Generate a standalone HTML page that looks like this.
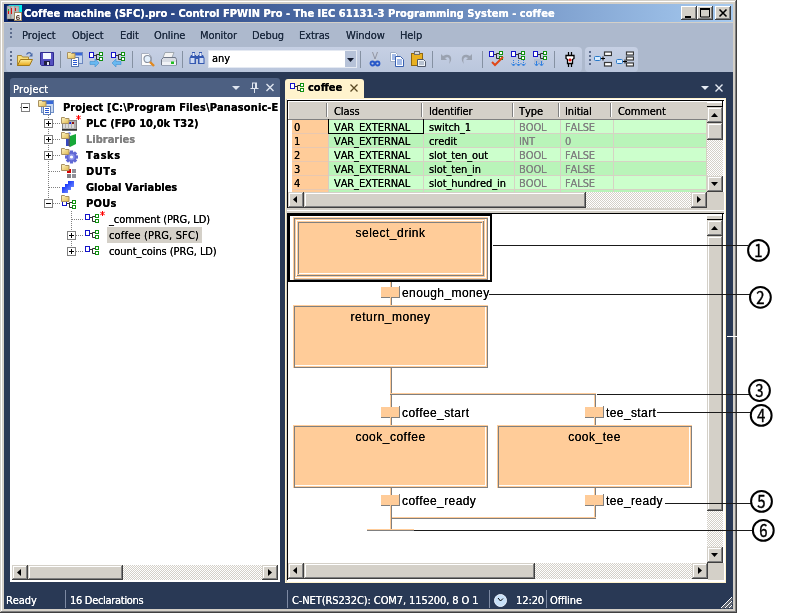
<!DOCTYPE html>
<html>
<head>
<meta charset="utf-8">
<title>Coffee machine (SFC).pro - Control FPWIN Pro</title>
<style>
html,body{margin:0;padding:0;background:#fff;}
body{width:800px;height:613px;position:relative;overflow:hidden;font-family:"DejaVu Sans Condensed","Liberation Sans",sans-serif;font-size:11px;color:#000;font-kerning:none;}
div,span,svg{position:absolute;box-sizing:border-box;}
.t{white-space:nowrap;line-height:14px;height:14px;will-change:transform;letter-spacing:-0.1px;text-shadow:0 0 0 currentColor;}
.b{font-weight:bold;letter-spacing:0;}
.a{font-family:"Liberation Sans",sans-serif;font-size:12px;line-height:14px;height:14px;white-space:nowrap;will-change:transform;letter-spacing:0.4px;text-shadow:0 0 0 currentColor;}
#win{left:0;top:0;width:737px;height:613px;background:#d4d0c8;box-shadow:inset -1px -1px 0 #404040,inset 1px 1px 0 #d4d0c8,inset -2px -2px 0 #808080,inset 2px 2px 0 #fff;}
#title{left:4px;top:4px;width:729px;height:18px;background:linear-gradient(90deg,#0a246a 0%,#a6caf0 100%);}
#title .t{color:#fff;left:20px;top:3px;letter-spacing:0.025px;}
.cb{background:#d4d0c8;width:16px;height:14px;top:2px;box-shadow:inset -1px -1px 0 #404040,inset 1px 1px 0 #fff,inset -2px -2px 0 #808080,inset 2px 2px 0 #d4d0c8;}
#bars{left:4px;top:23px;width:729px;height:49px;background:#adb9cd;}
.mi{color:#1b293e;top:29px;}
.tb{top:47px;height:25px;background:linear-gradient(#c6d0e4,#bac6dc);border-radius:4px;}
.sep{width:1px;background:#8591a2;top:51px;height:17px;}
.ic{width:16px;height:16px;top:51px;}
#main{left:4px;top:72px;width:729px;height:537px;background:#293955;}
.sb{background:#d4d0c8;box-shadow:inset -1px -1px 0 #404040,inset 1px 1px 0 #d4d0c8,inset -2px -2px 0 #808080,inset 2px 2px 0 #fff;}
.trk{background:repeating-conic-gradient(#fff 0 25%,#d4d0c8 0 50%) 0 0/2px 2px;}
.st{color:#fff;top:594px;}
.ss{width:1px;background:#7d8aa3;top:590px;height:18px;}
.dv{width:1px;background:repeating-linear-gradient(180deg,#808080 0 1px,transparent 1px 2px);}
.dh{height:1px;background:repeating-linear-gradient(90deg,#808080 0 1px,transparent 1px 2px);}
.xb{width:9px;height:9px;border:1px solid #808080;background:#fff;}
.xb i{position:absolute;background:#000;}
.xb .h{left:1px;top:3px;width:5px;height:1px;}
.xb .v{left:3px;top:1px;width:1px;height:5px;}
.stp{background:#ffcc99;box-shadow:inset 1px 1px 0 #fc9,inset -1px -1px 0 #808080,inset 2px 2px 0 #808080,inset -2px -2px 0 #fc9,inset -3px -3px 0 #fff;}
.stp .in1{left:3px;top:3px;right:4px;bottom:4px;box-shadow:inset 1px 1px 0 #fff,inset -1px -1px 0 #808080,inset 2px 2px 0 #fc9,inset -2px -2px 0 #fc9,inset 3px 3px 0 #808080,inset -3px -3px 0 #fff;}
</style>
</head>
<body>
<div id="win"></div>
<div id="title"><span class="t b">Coffee machine (SFC).pro - Control FPWIN Pro - The IEC 61131-3 Programming System - coffee</span>
<div class="cb" style="left:677px"></div><div class="cb" style="left:693px"></div><div class="cb" style="left:711px"></div>
</div>
<div id="bars"></div>
<span class="t mi" style="left:22px">Project</span>
<span class="t mi" style="left:72px">Object</span>
<span class="t mi" style="left:120px">Edit</span>
<span class="t mi" style="left:154px">Online</span>
<span class="t mi" style="left:200px">Monitor</span>
<span class="t mi" style="left:252px">Debug</span>
<span class="t mi" style="left:299px">Extras</span>
<span class="t mi" style="left:346px">Window</span>
<span class="t mi" style="left:400px">Help</span>
<div class="tb" style="left:6px;width:576px"></div>
<div class="tb" style="left:585px;width:53px"></div>
<!--TOOLBAR-->
<svg style="left:6px;top:4px;will-change:transform" width="17" height="17" viewBox="0 0 17 17"><path d="M2 1h14v9z" fill="#00f0f0"/><rect x="1" y="2" width="4" height="13" fill="#b8b8b8" stroke="#808080" stroke-width=".5"/><rect x="5" y="2" width="4" height="13" fill="#c4c4c4" stroke="#808080" stroke-width=".5"/><rect x="9" y="2" width="4" height="13" fill="#b8b8b8" stroke="#808080" stroke-width=".5"/><rect x="2" y="5" width="1" height="2" fill="#10c010"/><rect x="2" y="7" width="1" height="3" fill="#e01010"/><rect x="5" y="4" width="1" height="6" fill="#e01010"/><rect x="9" y="4" width="1" height="3" fill="#e01010"/><path d="M2 16h10" stroke="#000"/><rect x="8.500" y="8.500" width="7" height="8" fill="#fff" stroke="#a08860"/><text x="12" y="15.500" font-size="8" font-weight="bold" text-anchor="middle" font-family="Liberation Sans,sans-serif" fill="#4a3020">6</text></svg>
<!-- caption glyphs -->
<svg style="left:681px;top:6px" width="50" height="14" viewBox="0 0 50 14"><path d="M4 10h6v2h-6z"/><path d="M19.500 3v8h9v-8z" fill="none" stroke="#000"/><path d="M19 3h10" stroke="#000" stroke-width="2"/><path d="M38.500 3.500l7 7M45.500 3.500l-7 7" stroke="#000" stroke-width="1.600" fill="none"/></svg>
<!-- grippers -->
<svg style="left:10px;top:28px" width="2" height="10"><path d="M0 0h2v2h-2zM0 4h2v2h-2zM0 8h2v2h-2z" fill="#5c6c8c"/></svg>
<svg style="left:10px;top:51px" width="2" height="14"><path d="M0 0h2v2h-2zM0 4h2v2h-2zM0 8h2v2h-2zM0 12h2v2h-2z" fill="#5c6c8c"/></svg>
<svg style="left:589px;top:51px" width="2" height="14"><path d="M0 0h2v2h-2zM0 4h2v2h-2zM0 8h2v2h-2zM0 12h2v2h-2z" fill="#5c6c8c"/></svg>
<div class="sep" style="left:60px"></div><div class="sep" style="left:132px"></div><div class="sep" style="left:182px"></div><div class="sep" style="left:360px"></div><div class="sep" style="left:432px"></div><div class="sep" style="left:482px"></div><div class="sep" style="left:554px"></div>
<!-- open -->
<svg class="ic" style="left:17px" viewBox="0 0 16 16"><defs><linearGradient id="gy" x1="0" y1="0" x2="0" y2="1"><stop offset="0" stop-color="#fff0a0"/><stop offset="1" stop-color="#e8a818"/></linearGradient></defs><path d="M0.500 4.500h4l1 1.500h6v8.500h-11z" fill="#f8dc78" stroke="#a88838"/><path d="M3.500 8.500h12l-3 6h-12z" fill="url(#gy)" stroke="#a07818"/><path d="M9.500 3.500c1.500-2.500 4-2.500 5 0" fill="none" stroke="#4868a8" stroke-width="1.200"/><path d="M15.500 2v3.500h-3.500z" fill="#4868a8"/></svg>
<!-- save -->
<svg class="ic" style="left:40px" viewBox="0 0 16 16"><path d="M0.500 1.500h13v13h-12l-1-1z" fill="#5450c0" stroke="#302c90"/><rect x="3" y="2" width="8" height="6" fill="#f4f8ff"/><rect x="4" y="10" width="6" height="4" fill="#202040"/><rect x="7" y="11" width="2" height="3" fill="#e0e4f0"/></svg>
<!-- project -->
<svg class="ic" style="left:67px" viewBox="0 0 16 16"><rect x="5.500" y="1.500" width="10" height="11" fill="#c8d8f0" stroke="#6c88c0"/><rect x="6" y="2" width="9" height="2.500" fill="#3868d8"/><rect x="4.500" y="6.500" width="7" height="9" fill="#fff" stroke="#5878b0"/><path d="M6 9.500h4M6 11.500h4M6 13.500h4" stroke="#2858d0"/><use href="#fold"/></svg>
<!-- pou + right arrow -->
<svg class="ic" style="left:89px" viewBox="0 0 16 16"><g transform="translate(0,1)"><use href="#pou"/></g><path d="M1 10.500h5v-2.500l4 4-4 4v-2.500h-5z" fill="#68b8f0" stroke="#4090d0" stroke-width=".6"/></svg>
<svg class="ic" style="left:111px" viewBox="0 0 16 16"><g transform="translate(0,1)"><use href="#pou"/></g><path d="M10 10.500h-5v-2.500l-4 4 4 4v-2.500h5z" fill="#68b8f0" stroke="#4090d0" stroke-width=".6"/></svg>
<!-- preview -->
<svg class="ic" style="left:140px" viewBox="0 0 16 16"><path d="M1.500 2.500h7l3 3v9h-10z" fill="#fcfcfc" stroke="#a8b0c0"/><circle cx="7.500" cy="8" r="3.500" fill="#e4f0fc" stroke="#8890a0" stroke-width="1.200"/><path d="M10 11l4 4" stroke="#e08820" stroke-width="2.400"/></svg>
<!-- print -->
<svg class="ic" style="left:161px" viewBox="0 0 16 16"><path d="M4 1.500h9l-2 5h-9z" fill="#f4f4f4" stroke="#a0a8b0"/><path d="M0.500 8.500l2-2h12l1 2v5.500h-15z" fill="#d8dce4" stroke="#707888"/><rect x="1" y="11" width="14" height="3" fill="#f0f2f6"/><rect x="10" y="10.500" width="3" height="2.500" fill="#20c020"/></svg>
<!-- binoculars -->
<svg class="ic" style="left:189px" viewBox="0 0 16 16"><path d="M3 1h3v3h1v9h-6.500v-6l1.500-3h1zM10 1h3v3h1l1.500 3v6h-6.500v-9h1z" fill="#3458b0"/><rect x="1.500" y="7" width="4" height="5" fill="#d0dcf4"/><rect x="10.500" y="7" width="4" height="5" fill="#d0dcf4"/><rect x="7" y="5" width="2" height="3" fill="#3458b0"/><rect x="3.500" y="2" width="2" height="3" fill="#e8eefc"/><rect x="10.500" y="2" width="2" height="3" fill="#e8eefc"/></svg>
<!-- combo -->
<div style="left:208px;top:50px;width:149px;height:18px;background:#fff;border:1px solid #e4e9f2"></div>
<div style="left:345px;top:51px;width:11px;height:16px;background:#b6c2d8"></div>
<svg style="left:347px;top:58px" width="7" height="4"><path d="M0 0h7L3.500 4z" fill="#10182c"/></svg>
<span class="t" style="left:212px;top:52px">any</span>
<!-- cut -->
<svg class="ic" style="left:367px" viewBox="0 0 16 16"><path d="M5.500 1l3 9M10.500 1l-3 9" stroke="#c8ccd4" stroke-width="2" fill="none"/><path d="M5.500 1l2.500 7M10.500 1l-2.500 7" stroke="#8088a0" stroke-width=".8" fill="none"/><circle cx="5.500" cy="12.500" r="2" fill="none" stroke="#2858c8" stroke-width="1.800"/><circle cx="10.500" cy="12.500" r="2" fill="none" stroke="#2858c8" stroke-width="1.800"/></svg>
<!-- copy -->
<svg class="ic" style="left:389px" viewBox="0 0 16 16"><path d="M1.500 1.500h5l2 2v7h-7z" fill="#fff" stroke="#a0b0c8"/><path d="M3 4h4M3 6h4M3 8h4" stroke="#4878d0"/><path d="M6.500 5.500h5l3 3v7h-8z" fill="#fff" stroke="#3860b0"/><path d="M8 9h5M8 11h5M8 13h5" stroke="#4878d0"/></svg>
<!-- paste -->
<svg class="ic" style="left:411px" viewBox="0 0 16 16"><rect x="0.500" y="2.500" width="11" height="12" fill="#e8b020" stroke="#906810"/><rect x="3.500" y="0.500" width="5" height="3" fill="#d8d8d8" stroke="#707070"/><path d="M6.500 8.500h6l2 2v5h-8z" fill="#f0f4f8" stroke="#505868"/><path d="M8 11h5M8 13h5" stroke="#8090a8"/></svg>
<!-- undo / redo -->
<svg class="ic" style="left:439px" viewBox="0 0 16 16"><path d="M2 3v6h6l-2-2c3-2 6 0 4 6c5-6 1-12-6-8z" fill="#9aa2b0"/></svg>
<svg class="ic" style="left:458px" viewBox="0 0 16 16"><path d="M14 3v6h-6l2-2c-3-2-6 0-4 6c-5-6-1-12 6-8z" fill="#9aa2b0"/></svg>
<!-- check -->
<svg class="ic" style="left:489px" viewBox="0 0 16 16"><use href="#pou"/><path d="M3 11l3 3 8-8" stroke="#e04818" stroke-width="2" fill="none"/></svg>
<!-- compile -->
<svg class="ic" style="left:511px" viewBox="0 0 16 16"><use href="#pou"/><path d="M2.500 9v5M7.500 9v5M12.500 9v5" stroke="#3080e0" stroke-dasharray="1 1"/><path d="M0.500 12.500l2 2.500 2-2.500M5.500 12.500l2 2.500 2-2.500M10.500 12.500l2 2.500 2-2.500" stroke="#3080e0" fill="none"/></svg>
<svg class="ic" style="left:533px" viewBox="0 0 16 16"><use href="#pou"/><path d="M1 8h9v4h-9z" fill="#a8b4c8" opacity=".6"/><path d="M3.500 10v4M8.500 10v4" stroke="#3080e0"/><path d="M1.500 12.500l2 2.500 2-2.500M6.500 12.500l2 2.500 2-2.500" stroke="#3080e0" fill="none"/></svg>
<!-- plug -->
<svg class="ic" style="left:562px" viewBox="0 0 16 16"><path d="M6.500 1v3.500M9.500 1v3.500" stroke="#000" stroke-width="1.200"/><path d="M4 4.500h8v3l-1.500 1v4h-5v-4l-1.500-1z" fill="#fff" stroke="#000" stroke-width="1.300"/><path d="M8 7.500v3M6.500 9h3" stroke="#e00000" stroke-width="1.400"/><path d="M6.500 13v3M9.500 13v3" stroke="#000" stroke-width="1.200"/></svg>
<!-- toolbar 2 -->
<svg style="left:594px;top:51px" width="18" height="16" viewBox="0 0 18 16"><rect x="0.500" y="5.500" width="6" height="4" rx="1" fill="#d8ecff" stroke="#2878c8"/><path d="M7 7.500h4M9 5.500v4" stroke="#000"/><rect x="10.500" y="1" width="7" height="3.500" fill="#fff" stroke="#383838" stroke-width="1.200"/><rect x="10.500" y="11.500" width="7" height="3.500" fill="#fff" stroke="#383838" stroke-width="1.200"/></svg>
<svg style="left:616px;top:51px" width="18" height="16" viewBox="0 0 18 16"><rect x="0.500" y="8.500" width="6" height="4" rx="1" fill="#d8ecff" stroke="#2878c8"/><path d="M7 10.500h4M9 8.500v4" stroke="#000"/><rect x="10.500" y="1" width="7" height="3" fill="#fff" stroke="#383838" stroke-width="1.200"/><rect x="10.500" y="6" width="7" height="3" fill="#fff" stroke="#383838" stroke-width="1.200"/><rect x="10.500" y="12" width="7" height="3" fill="#fff" stroke="#383838" stroke-width="1.200"/></svg>
<div id="main"></div>
<!--PROJECT-->
<div style="left:10px;top:78px;width:270px;height:19px;background:#4d6082;border-radius:3px 3px 0 0"></div>
<span class="t" style="left:13px;top:83px;color:#fff;letter-spacing:0.15px">Project</span>
<svg style="left:231px;top:82px" width="46" height="12" viewBox="0 0 46 12"><path d="M1 4h8l-4 4z" fill="#dfe5ef"/><path d="M21.5 1v5M25.500 1v5M21 1h5M19.500 6.500h8M23.500 7v4" stroke="#dfe5ef" fill="none"/><path d="M24.500 1v5" stroke="#dfe5ef"/><path d="M35.500 2l7 7M42.500 2l-7 7" stroke="#dfe5ef" stroke-width="1.400" fill="none"/></svg>
<div id="tree" style="left:10px;top:97px;width:270px;height:485px;background:#fff;overflow:hidden">
<!-- dotted lines -->
<div class="dv" style="left:38px;top:18px;height:89px"></div>
<div class="dv" style="left:61px;top:114px;height:41px"></div>
<div class="dh" style="left:10px;top:10px;width:2px"></div>
<div class="dh" style="left:43px;top:26px;width:8px"></div>
<div class="dh" style="left:43px;top:42px;width:8px"></div>
<div class="dh" style="left:43px;top:58px;width:8px"></div>
<div class="dh" style="left:39px;top:74px;width:12px"></div>
<div class="dh" style="left:39px;top:90px;width:12px"></div>
<div class="dh" style="left:43px;top:106px;width:8px"></div>
<div class="dh" style="left:62px;top:122px;width:12px"></div>
<div class="dh" style="left:66px;top:138px;width:8px"></div>
<div class="dh" style="left:66px;top:154px;width:8px"></div>
<!-- expand boxes -->
<div class="xb" style="left:11px;top:6px"><i class="h"></i></div>
<div class="xb" style="left:34px;top:22px"><i class="h"></i><i class="v"></i></div>
<div class="xb" style="left:34px;top:38px"><i class="h"></i><i class="v"></i></div>
<div class="xb" style="left:34px;top:54px"><i class="h"></i><i class="v"></i></div>
<div class="xb" style="left:34px;top:102px"><i class="h"></i></div>
<div class="xb" style="left:57px;top:134px"><i class="h"></i><i class="v"></i></div>
<div class="xb" style="left:57px;top:150px"><i class="h"></i><i class="v"></i></div>
<!-- labels -->
<div style="left:97px;top:130px;width:95px;height:16px;background:#d4d0c8"></div>
<span class="t b" style="left:53px;top:4px;letter-spacing:0.12px">Project [C:\Program Files\Panasonic-E</span>
<span class="t b" style="left:76px;top:20px">PLC (FP0 10,0k T32)</span>
<span class="t b" style="left:76px;top:36px;color:#808080">Libraries</span>
<span class="t b" style="left:76px;top:52px;letter-spacing:0.6px">Tasks</span>
<span class="t b" style="left:76px;top:68px;letter-spacing:0.5px">DUTs</span>
<span class="t b" style="left:76px;top:84px">Global Variables</span>
<span class="t b" style="left:76px;top:100px;letter-spacing:0.25px">POUs</span>
<span class="t" style="left:99px;top:116px">_comment (PRG, LD)</span>
<span class="t" style="left:99px;top:132px;letter-spacing:0.17px">coffee (PRG, SFC)</span>
<span class="t" style="left:99px;top:148px;letter-spacing:-0.08px">count_coins (PRG, LD)</span>
<!--TREEICONS-->
<svg width="0" height="0" style="left:0;top:0"><defs>
<linearGradient id="gf" x1="0" y1="0" x2="1" y2="1"><stop offset="0" stop-color="#fff6c8"/><stop offset="1" stop-color="#e0b84a"/></linearGradient>
<linearGradient id="gb" x1="0" y1="0" x2="1" y2="1"><stop offset="0" stop-color="#1030f8"/><stop offset="1" stop-color="#6a86ff"/></linearGradient>
<g id="fold"><path d="M0.500 1.500h3l1 1h3.500v5h-7.500z" fill="url(#gf)" stroke="#a89060" stroke-width="1"/></g>
<g id="pou"><rect x="0.500" y="0.500" width="4" height="5" fill="#fff" stroke="#1414c8"/><path d="M5 3.500h2.500M7.500 2.500h3M7.500 2.500v5h3" stroke="#303030" fill="none"/><rect x="10.500" y="0.500" width="3" height="3" fill="#fff" stroke="#109010"/><rect x="10.500" y="5.500" width="3" height="3" fill="#fff" stroke="#109010"/></g>
<g id="ast"><path d="M2.500 0v5M0.300 1.200l4.400 2.600M4.700 1.200l-4.400 2.600" stroke="#f00" stroke-width="1" fill="none"/></g>
</defs></svg>
<!-- root -->
<svg style="left:28px;top:2px" width="17" height="17" viewBox="0 0 17 17"><rect x="3.500" y="1.500" width="12" height="12" fill="#c8d8f0" stroke="#7090c8"/><rect x="4" y="2" width="11" height="3" fill="#3868d8"/><rect x="5.500" y="7.500" width="7" height="8" fill="#fff" stroke="#6080b8"/><path d="M7 9.500h4M7 11.500h4M7 13.500h4" stroke="#2858d0"/><use href="#fold"/></svg>
<!-- PLC -->
<svg style="left:51px;top:19px" width="17" height="15" viewBox="0 0 17 15"><rect x="1.500" y="4.500" width="14" height="9" fill="#b0b0b0" stroke="#808080"/><path d="M3 8v4M6 8v4M9 8v4M12 8v4" stroke="#e8e8e8" stroke-width="1.500"/><rect x="5" y="6" width="2" height="2" fill="#109020"/><rect x="8" y="6" width="2" height="2" fill="#1020f0"/><rect x="11" y="6" width="2" height="2" fill="#901010"/><path d="M1 14h15" stroke="#000" stroke-width="1.200"/><use href="#fold"/></svg>
<svg style="left:66px;top:18px" width="5" height="5"><use href="#ast"/></svg>
<!-- Libraries -->
<svg style="left:51px;top:34px" width="17" height="17" viewBox="0 0 17 17"><path d="M5 4h4v11h-4z" fill="#3848c0"/><path d="M6 2l3-1 1 2-3 1z" fill="#7088f0"/><path d="M9 5l6-2v10l-6 3z" fill="#18a838"/><path d="M9 5v11l-1.500-1v-10z" fill="#505860"/><use href="#fold"/></svg>
<!-- Tasks -->
<svg style="left:51px;top:50px" width="17" height="17" viewBox="0 0 17 17"><g transform="translate(10.500,10)"><g fill="#6068d4"><circle r="5"/><rect x="-1.600" y="-6.500" width="3.200" height="13"/><rect x="-1.600" y="-6.500" width="3.200" height="13" transform="rotate(45)"/><rect x="-1.600" y="-6.500" width="3.200" height="13" transform="rotate(90)"/><rect x="-1.600" y="-6.500" width="3.200" height="13" transform="rotate(135)"/></g><circle r="3.200" fill="#8890e8"/><circle r="1.600" fill="#fff"/></g><use href="#fold"/></svg>
<!-- DUTs -->
<svg style="left:51px;top:66px" width="17" height="17" viewBox="0 0 17 17"><rect x="6" y="6" width="4" height="4" fill="#d80000"/><rect x="11" y="6" width="4" height="4" fill="#909098"/><rect x="6" y="11" width="4" height="4" fill="#808088"/><rect x="11" y="11" width="4" height="4" fill="#909098"/><use href="#fold"/></svg>
<!-- Globals -->
<svg style="left:51px;top:83px" width="17" height="15" viewBox="0 0 17 15"><rect x="7" y="1" width="6" height="6" fill="url(#gb)"/><rect x="4" y="4" width="6" height="6" fill="url(#gb)"/><rect x="1" y="7" width="6" height="6" fill="url(#gb)"/></svg>
<!-- POUs -->
<svg style="left:51px;top:97px" width="17" height="18" viewBox="0 0 17 18"><g transform="translate(1,6)"><use href="#pou"/></g><use href="#fold"/></svg>
<svg style="left:75px;top:117px" width="16" height="11"><use href="#pou"/></svg>
<svg style="left:90px;top:114px" width="5" height="5"><use href="#ast"/></svg>
<svg style="left:75px;top:133px" width="16" height="11"><use href="#pou"/></svg>
<svg style="left:75px;top:149px" width="16" height="11"><use href="#pou"/></svg>
<!-- h scrollbar -->
<div class="trk" style="left:2px;top:468px;width:266px;height:15px"></div>
<div class="sb" style="left:2px;top:468px;width:16px;height:15px"><svg style="left:5px;top:4px" width="4" height="7"><path d="M4 0v7L0 3.500z"/></svg></div>
<div class="sb" style="left:18px;top:468px;width:95px;height:15px"></div>
<div class="sb" style="left:252px;top:468px;width:16px;height:15px"><svg style="left:6px;top:4px" width="4" height="7"><path d="M0 0v7L4 3.500z"/></svg></div>
</div>
<!--EDITOR-->
<div style="left:285px;top:79px;width:79px;height:20px;background:#fff3cd;border-radius:3px 3px 0 0"></div>
<svg style="left:290px;top:83px" width="16" height="11"><use href="#pou"/></svg>
<span class="t b" style="left:308px;top:81px">coffee</span>
<svg style="left:349px;top:83px" width="10" height="10"><path d="M1.500 1.500l7 7M8.500 1.500l-7 7" stroke="#5a4a24" stroke-width="1.300" fill="none"/></svg>
<svg style="left:701px;top:84px" width="26" height="10"><path d="M0 2h8l-4 4z" fill="#e6ebf3"/><path d="M14.500 0.500l7 7M21.500 0.500l-7 7" stroke="#e6ebf3" stroke-width="1.400" fill="none"/></svg>
<div style="left:285px;top:98px;width:441px;height:485px;background:#fff3cd"></div>
<div style="left:286px;top:99px;width:439px;height:483px;background:#fff;border-left:1px solid #d4d0c8"></div>
<div id="grid" style="left:287px;top:100px;width:437px;height:108px;background:#d4d0c8;overflow:hidden;border-left:1px solid #000;border-top:1px solid #000">
<div style="left:38px;top:2px;width:1px;height:14px;background:#808080;"></div>
<div style="left:39px;top:2px;width:1px;height:14px;background:#fff;"></div>
<div style="left:133px;top:2px;width:1px;height:14px;background:#808080;"></div>
<div style="left:134px;top:2px;width:1px;height:14px;background:#fff;"></div>
<div style="left:224px;top:2px;width:1px;height:14px;background:#808080;"></div>
<div style="left:225px;top:2px;width:1px;height:14px;background:#fff;"></div>
<div style="left:270px;top:2px;width:1px;height:14px;background:#808080;"></div>
<div style="left:271px;top:2px;width:1px;height:14px;background:#fff;"></div>
<div style="left:322px;top:2px;width:1px;height:14px;background:#808080;"></div>
<div style="left:323px;top:2px;width:1px;height:14px;background:#fff;"></div>
<div style="left:0px;top:18px;width:419px;height:1px;background:#808080;"></div>
<div style="left:0px;top:0px;width:419px;height:1px;background:#fff;"></div>
<div style="left:0px;top:0px;width:1px;height:18px;background:#fff;"></div>
<span class="t" style="left:46px;top:4px;">Class</span>
<span class="t" style="left:141px;top:4px;">Identifier</span>
<span class="t" style="left:231px;top:4px;">Type</span>
<span class="t" style="left:277px;top:4px;">Initial</span>
<span class="t" style="left:330px;top:4px;">Comment</span>
<div style="left:0px;top:19px;width:4px;height:14px;background:#fff;"></div>
<div style="left:4px;top:19px;width:36px;height:13px;background:#ffcc99;"></div>
<div style="left:4px;top:32px;width:36px;height:1px;background:#e8c8b0;"></div>
<div style="left:40px;top:19px;width:1px;height:14px;background:#d8ccc0;"></div>
<div style="left:41px;top:19px;width:94px;height:13px;background:#ccffcc;"></div>
<div style="left:41px;top:32px;width:95px;height:1px;background:#d6d2c4;"></div>
<div style="left:135px;top:19px;width:1px;height:14px;background:#d6d2c4;"></div>
<div style="left:136px;top:19px;width:90px;height:13px;background:#ccffcc;"></div>
<div style="left:136px;top:32px;width:91px;height:1px;background:#d6d2c4;"></div>
<div style="left:226px;top:19px;width:1px;height:14px;background:#d6d2c4;"></div>
<div style="left:227px;top:19px;width:45px;height:13px;background:#ccffcc;"></div>
<div style="left:227px;top:32px;width:46px;height:1px;background:#d6d2c4;"></div>
<div style="left:272px;top:19px;width:1px;height:14px;background:#d6d2c4;"></div>
<div style="left:273px;top:19px;width:52px;height:13px;background:#ccffcc;"></div>
<div style="left:273px;top:32px;width:53px;height:1px;background:#d6d2c4;"></div>
<div style="left:325px;top:19px;width:1px;height:14px;background:#d6d2c4;"></div>
<div style="left:326px;top:19px;width:92px;height:13px;background:#ccffcc;"></div>
<div style="left:326px;top:32px;width:93px;height:1px;background:#d6d2c4;"></div>
<div style="left:418px;top:19px;width:1px;height:14px;background:#d6d2c4;"></div>
<span class="t" style="left:6px;top:20px;">0</span>
<span class="t" style="left:46px;top:20px;">VAR_EXTERNAL</span>
<span class="t" style="left:141px;top:20px;">switch_1</span>
<span class="t" style="left:231px;top:20px;color:#808080">BOOL</span>
<span class="t" style="left:277px;top:20px;color:#808080">FALSE</span>
<div style="left:0px;top:33px;width:4px;height:14px;background:#fff;"></div>
<div style="left:4px;top:33px;width:36px;height:13px;background:#ffcc99;"></div>
<div style="left:4px;top:46px;width:36px;height:1px;background:#e8c8b0;"></div>
<div style="left:40px;top:33px;width:1px;height:14px;background:#d8ccc0;"></div>
<div style="left:41px;top:33px;width:94px;height:13px;background:#b9f4b9;"></div>
<div style="left:41px;top:46px;width:95px;height:1px;background:#d6d2c4;"></div>
<div style="left:135px;top:33px;width:1px;height:14px;background:#d6d2c4;"></div>
<div style="left:136px;top:33px;width:90px;height:13px;background:#b9f4b9;"></div>
<div style="left:136px;top:46px;width:91px;height:1px;background:#d6d2c4;"></div>
<div style="left:226px;top:33px;width:1px;height:14px;background:#d6d2c4;"></div>
<div style="left:227px;top:33px;width:45px;height:13px;background:#b9f4b9;"></div>
<div style="left:227px;top:46px;width:46px;height:1px;background:#d6d2c4;"></div>
<div style="left:272px;top:33px;width:1px;height:14px;background:#d6d2c4;"></div>
<div style="left:273px;top:33px;width:52px;height:13px;background:#b9f4b9;"></div>
<div style="left:273px;top:46px;width:53px;height:1px;background:#d6d2c4;"></div>
<div style="left:325px;top:33px;width:1px;height:14px;background:#d6d2c4;"></div>
<div style="left:326px;top:33px;width:92px;height:13px;background:#b9f4b9;"></div>
<div style="left:326px;top:46px;width:93px;height:1px;background:#d6d2c4;"></div>
<div style="left:418px;top:33px;width:1px;height:14px;background:#d6d2c4;"></div>
<span class="t" style="left:6px;top:34px;">1</span>
<span class="t" style="left:46px;top:34px;">VAR_EXTERNAL</span>
<span class="t" style="left:141px;top:34px;">credit</span>
<span class="t" style="left:231px;top:34px;color:#808080">INT</span>
<span class="t" style="left:277px;top:34px;color:#808080">0</span>
<div style="left:0px;top:47px;width:4px;height:14px;background:#fff;"></div>
<div style="left:4px;top:47px;width:36px;height:13px;background:#ffcc99;"></div>
<div style="left:4px;top:60px;width:36px;height:1px;background:#e8c8b0;"></div>
<div style="left:40px;top:47px;width:1px;height:14px;background:#d8ccc0;"></div>
<div style="left:41px;top:47px;width:94px;height:13px;background:#ccffcc;"></div>
<div style="left:41px;top:60px;width:95px;height:1px;background:#d6d2c4;"></div>
<div style="left:135px;top:47px;width:1px;height:14px;background:#d6d2c4;"></div>
<div style="left:136px;top:47px;width:90px;height:13px;background:#ccffcc;"></div>
<div style="left:136px;top:60px;width:91px;height:1px;background:#d6d2c4;"></div>
<div style="left:226px;top:47px;width:1px;height:14px;background:#d6d2c4;"></div>
<div style="left:227px;top:47px;width:45px;height:13px;background:#ccffcc;"></div>
<div style="left:227px;top:60px;width:46px;height:1px;background:#d6d2c4;"></div>
<div style="left:272px;top:47px;width:1px;height:14px;background:#d6d2c4;"></div>
<div style="left:273px;top:47px;width:52px;height:13px;background:#ccffcc;"></div>
<div style="left:273px;top:60px;width:53px;height:1px;background:#d6d2c4;"></div>
<div style="left:325px;top:47px;width:1px;height:14px;background:#d6d2c4;"></div>
<div style="left:326px;top:47px;width:92px;height:13px;background:#ccffcc;"></div>
<div style="left:326px;top:60px;width:93px;height:1px;background:#d6d2c4;"></div>
<div style="left:418px;top:47px;width:1px;height:14px;background:#d6d2c4;"></div>
<span class="t" style="left:6px;top:48px;">2</span>
<span class="t" style="left:46px;top:48px;">VAR_EXTERNAL</span>
<span class="t" style="left:141px;top:48px;">slot_ten_out</span>
<span class="t" style="left:231px;top:48px;color:#808080">BOOL</span>
<span class="t" style="left:277px;top:48px;color:#808080">FALSE</span>
<div style="left:0px;top:61px;width:4px;height:14px;background:#fff;"></div>
<div style="left:4px;top:61px;width:36px;height:13px;background:#ffcc99;"></div>
<div style="left:4px;top:74px;width:36px;height:1px;background:#e8c8b0;"></div>
<div style="left:40px;top:61px;width:1px;height:14px;background:#d8ccc0;"></div>
<div style="left:41px;top:61px;width:94px;height:13px;background:#b9f4b9;"></div>
<div style="left:41px;top:74px;width:95px;height:1px;background:#d6d2c4;"></div>
<div style="left:135px;top:61px;width:1px;height:14px;background:#d6d2c4;"></div>
<div style="left:136px;top:61px;width:90px;height:13px;background:#b9f4b9;"></div>
<div style="left:136px;top:74px;width:91px;height:1px;background:#d6d2c4;"></div>
<div style="left:226px;top:61px;width:1px;height:14px;background:#d6d2c4;"></div>
<div style="left:227px;top:61px;width:45px;height:13px;background:#b9f4b9;"></div>
<div style="left:227px;top:74px;width:46px;height:1px;background:#d6d2c4;"></div>
<div style="left:272px;top:61px;width:1px;height:14px;background:#d6d2c4;"></div>
<div style="left:273px;top:61px;width:52px;height:13px;background:#b9f4b9;"></div>
<div style="left:273px;top:74px;width:53px;height:1px;background:#d6d2c4;"></div>
<div style="left:325px;top:61px;width:1px;height:14px;background:#d6d2c4;"></div>
<div style="left:326px;top:61px;width:92px;height:13px;background:#b9f4b9;"></div>
<div style="left:326px;top:74px;width:93px;height:1px;background:#d6d2c4;"></div>
<div style="left:418px;top:61px;width:1px;height:14px;background:#d6d2c4;"></div>
<span class="t" style="left:6px;top:62px;">3</span>
<span class="t" style="left:46px;top:62px;">VAR_EXTERNAL</span>
<span class="t" style="left:141px;top:62px;">slot_ten_in</span>
<span class="t" style="left:231px;top:62px;color:#808080">BOOL</span>
<span class="t" style="left:277px;top:62px;color:#808080">FALSE</span>
<div style="left:0px;top:75px;width:4px;height:14px;background:#fff;"></div>
<div style="left:4px;top:75px;width:36px;height:13px;background:#ffcc99;"></div>
<div style="left:4px;top:88px;width:36px;height:1px;background:#e8c8b0;"></div>
<div style="left:40px;top:75px;width:1px;height:14px;background:#d8ccc0;"></div>
<div style="left:41px;top:75px;width:94px;height:13px;background:#ccffcc;"></div>
<div style="left:41px;top:88px;width:95px;height:1px;background:#d6d2c4;"></div>
<div style="left:135px;top:75px;width:1px;height:14px;background:#d6d2c4;"></div>
<div style="left:136px;top:75px;width:90px;height:13px;background:#ccffcc;"></div>
<div style="left:136px;top:88px;width:91px;height:1px;background:#d6d2c4;"></div>
<div style="left:226px;top:75px;width:1px;height:14px;background:#d6d2c4;"></div>
<div style="left:227px;top:75px;width:45px;height:13px;background:#ccffcc;"></div>
<div style="left:227px;top:88px;width:46px;height:1px;background:#d6d2c4;"></div>
<div style="left:272px;top:75px;width:1px;height:14px;background:#d6d2c4;"></div>
<div style="left:273px;top:75px;width:52px;height:13px;background:#ccffcc;"></div>
<div style="left:273px;top:88px;width:53px;height:1px;background:#d6d2c4;"></div>
<div style="left:325px;top:75px;width:1px;height:14px;background:#d6d2c4;"></div>
<div style="left:326px;top:75px;width:92px;height:13px;background:#ccffcc;"></div>
<div style="left:326px;top:88px;width:93px;height:1px;background:#d6d2c4;"></div>
<div style="left:418px;top:75px;width:1px;height:14px;background:#d6d2c4;"></div>
<span class="t" style="left:6px;top:76px;">4</span>
<span class="t" style="left:46px;top:76px;">VAR_EXTERNAL</span>
<span class="t" style="left:141px;top:76px;">slot_hundred_in</span>
<span class="t" style="left:231px;top:76px;color:#808080">BOOL</span>
<span class="t" style="left:277px;top:76px;color:#808080">FALSE</span>
<div style="left:0px;top:89px;width:4px;height:14px;background:#fff;"></div>
<div style="left:4px;top:89px;width:36px;height:13px;background:#ffcc99;"></div>
<div style="left:4px;top:102px;width:36px;height:1px;background:#e8c8b0;"></div>
<div style="left:40px;top:89px;width:1px;height:14px;background:#d8ccc0;"></div>
<div style="left:41px;top:89px;width:94px;height:13px;background:#b9f4b9;"></div>
<div style="left:41px;top:102px;width:95px;height:1px;background:#d6d2c4;"></div>
<div style="left:135px;top:89px;width:1px;height:14px;background:#d6d2c4;"></div>
<div style="left:136px;top:89px;width:90px;height:13px;background:#b9f4b9;"></div>
<div style="left:136px;top:102px;width:91px;height:1px;background:#d6d2c4;"></div>
<div style="left:226px;top:89px;width:1px;height:14px;background:#d6d2c4;"></div>
<div style="left:227px;top:89px;width:45px;height:13px;background:#b9f4b9;"></div>
<div style="left:227px;top:102px;width:46px;height:1px;background:#d6d2c4;"></div>
<div style="left:272px;top:89px;width:1px;height:14px;background:#d6d2c4;"></div>
<div style="left:273px;top:89px;width:52px;height:13px;background:#b9f4b9;"></div>
<div style="left:273px;top:102px;width:53px;height:1px;background:#d6d2c4;"></div>
<div style="left:325px;top:89px;width:1px;height:14px;background:#d6d2c4;"></div>
<div style="left:326px;top:89px;width:92px;height:13px;background:#b9f4b9;"></div>
<div style="left:326px;top:102px;width:93px;height:1px;background:#d6d2c4;"></div>
<div style="left:418px;top:89px;width:1px;height:14px;background:#d6d2c4;"></div>
<div style="left:40px;top:18px;width:96px;height:15px;border:1px solid #000;border-top:0"></div>
<div style="left:435px;top:0px;width:1px;height:91px;background:#fff;"></div>
<div style="left:419px;top:0px;width:16px;height:91px;background:;background:repeating-conic-gradient(#fff 0 25%,#d4d0c8 0 50%) 0 0/2px 2px"></div>
<div style="left:419px;top:0px;width:16px;height:6px;background:linear-gradient(#fff 0 2px,#d4d0c8 2px 5px,#000 5px 6px);border-right:1px solid #000"></div>
<div class="sb" style="left:419px;top:6px;width:16px;height:16px"><svg style="left:4px;top:6px" width="7" height="4"><path d="M0 4h7L3.500 0z"/></svg></div>
<div class="sb" style="left:419px;top:22px;width:16px;height:17px"></div>
<div class="sb" style="left:419px;top:75px;width:16px;height:16px"><svg style="left:4px;top:6px" width="7" height="4"><path d="M0 0h7L3.500 4z"/></svg></div>
<div style="left:0px;top:91px;width:419px;height:16px;background:;background:repeating-conic-gradient(#fff 0 25%,#d4d0c8 0 50%) 0 0/2px 2px"></div>
<div class="sb" style="left:0px;top:91px;width:16px;height:16px"><svg style="left:5px;top:4px" width="4" height="7"><path d="M4 0v7L0 3.500z"/></svg></div>
<div class="sb" style="left:16px;top:91px;width:282px;height:16px"></div>
<div class="sb" style="left:403px;top:91px;width:16px;height:16px"><svg style="left:6px;top:4px" width="4" height="7"><path d="M0 0v7L4 3.500z"/></svg></div>
<div style="left:419px;top:91px;width:17px;height:16px;background:#d4d0c8;"></div>
</div>
<div style="left:287px;top:208px;width:437px;height:5px;background:linear-gradient(#d4d0c8 0 2px,#fff 2px 3px,#d4d0c8 3px 5px)"></div>
<div id="sfc" style="left:287px;top:213px;width:437px;height:367px;background:#fff;overflow:hidden;border-left:1px solid #000;border-top:1px solid #000">
<div style="left:0px;top:0px;width:204px;height:68px;border:2px solid #000"></div>
<div style="left:102px;top:68px;width:1px;height:23px;background:#ffcc99;"></div>
<div style="left:103px;top:68px;width:1px;height:23px;background:#808080;"></div>
<div style="left:93px;top:73px;width:18px;height:10px;background:#ffcc99;"></div>
<div style="left:111px;top:72px;width:1px;height:12px;background:#808080;"></div>
<div style="left:93px;top:83px;width:18px;height:1px;background:#808080;"></div>
<div style="left:102px;top:83px;width:1px;height:1px;background:#ffcc99;"></div>
<span class="a" style="left:114px;top:72px;">enough_money</span>
<div style="left:102px;top:154px;width:1px;height:57px;background:#ffcc99;"></div>
<div style="left:103px;top:154px;width:1px;height:57px;background:#808080;"></div>
<div style="left:102px;top:179px;width:206px;height:1px;background:#ffcc99;"></div>
<div style="left:102px;top:180px;width:206px;height:1px;background:#808080;"></div>
<div style="left:306px;top:181px;width:1px;height:30px;background:#ffcc99;"></div>
<div style="left:307px;top:181px;width:1px;height:30px;background:#808080;"></div>
<div style="left:93px;top:193px;width:18px;height:10px;background:#ffcc99;"></div>
<div style="left:111px;top:192px;width:1px;height:12px;background:#808080;"></div>
<div style="left:93px;top:203px;width:18px;height:1px;background:#808080;"></div>
<div style="left:102px;top:203px;width:1px;height:1px;background:#ffcc99;"></div>
<span class="a" style="left:114px;top:192px;">coffee_start</span>
<div style="left:297px;top:193px;width:18px;height:10px;background:#ffcc99;"></div>
<div style="left:315px;top:192px;width:1px;height:12px;background:#808080;"></div>
<div style="left:297px;top:203px;width:18px;height:1px;background:#808080;"></div>
<div style="left:306px;top:203px;width:1px;height:1px;background:#ffcc99;"></div>
<span class="a" style="left:318px;top:192px;">tee_start</span>
<div style="left:102px;top:274px;width:1px;height:42px;background:#ffcc99;"></div>
<div style="left:103px;top:274px;width:1px;height:42px;background:#808080;"></div>
<div style="left:306px;top:274px;width:1px;height:30px;background:#ffcc99;"></div>
<div style="left:307px;top:274px;width:1px;height:30px;background:#808080;"></div>
<div style="left:104px;top:303px;width:204px;height:1px;background:#ffcc99;"></div>
<div style="left:104px;top:304px;width:204px;height:1px;background:#808080;"></div>
<div style="left:93px;top:281px;width:18px;height:10px;background:#ffcc99;"></div>
<div style="left:111px;top:280px;width:1px;height:12px;background:#808080;"></div>
<div style="left:93px;top:291px;width:18px;height:1px;background:#808080;"></div>
<div style="left:102px;top:291px;width:1px;height:1px;background:#ffcc99;"></div>
<span class="a" style="left:114px;top:280px;">coffee_ready</span>
<div style="left:297px;top:281px;width:18px;height:10px;background:#ffcc99;"></div>
<div style="left:315px;top:280px;width:1px;height:12px;background:#808080;"></div>
<div style="left:297px;top:291px;width:18px;height:1px;background:#808080;"></div>
<div style="left:306px;top:291px;width:1px;height:1px;background:#ffcc99;"></div>
<span class="a" style="left:318px;top:280px;">tee_ready</span>
<div style="left:79px;top:315px;width:47px;height:1px;background:#ffcc99;"></div>
<div style="left:79px;top:316px;width:47px;height:1px;background:#808080;"></div>
<div class="stp" style="left:5px;top:3px;width:195px;height:63px"><div class="in1"></div><span class="a" style="left:0;width:100%;text-align:center;top:9px;letter-spacing:0.5px">select_drink</span></div>
<div class="stp" style="left:5px;top:91px;width:195px;height:63px"><span class="a" style="left:0;width:100%;text-align:center;top:5px;letter-spacing:0.5px">return_money</span></div>
<div class="stp" style="left:5px;top:211px;width:195px;height:63px"><span class="a" style="left:0;width:100%;text-align:center;top:5px;letter-spacing:0.5px">cook_coffee</span></div>
<div class="stp" style="left:209px;top:211px;width:195px;height:63px"><span class="a" style="left:0;width:100%;text-align:center;top:5px;letter-spacing:0.5px">cook_tee</span></div>
<div style="left:419px;top:0px;width:16px;height:349px;background:;background:repeating-conic-gradient(#fff 0 25%,#d4d0c8 0 50%) 0 0/2px 2px"></div>
<div style="left:419px;top:0px;width:16px;height:6px;background:linear-gradient(#fff 0 2px,#d4d0c8 2px 5px,#000 5px 6px);border-right:1px solid #000"></div>
<div class="sb" style="left:419px;top:6px;width:16px;height:16px"><svg style="left:4px;top:6px" width="7" height="4"><path d="M0 4h7L3.500 0z"/></svg></div>
<div class="sb" style="left:419px;top:22px;width:16px;height:275px"></div>
<div class="sb" style="left:419px;top:333px;width:16px;height:16px"><svg style="left:4px;top:6px" width="7" height="4"><path d="M0 0h7L3.500 4z"/></svg></div>
<div style="left:0px;top:349px;width:420px;height:16px;background:;background:repeating-conic-gradient(#fff 0 25%,#d4d0c8 0 50%) 0 0/2px 2px"></div>
<div class="sb" style="left:0px;top:349px;width:16px;height:16px"><svg style="left:5px;top:4px" width="4" height="7"><path d="M4 0v7L0 3.500z"/></svg></div>
<div class="sb" style="left:16px;top:349px;width:231px;height:16px"></div>
<div class="sb" style="left:404px;top:349px;width:16px;height:16px"><svg style="left:6px;top:4px" width="4" height="7"><path d="M0 0v7L4 3.500z"/></svg></div>
<div style="left:420px;top:349px;width:16px;height:17px;background:#d4d0c8;"></div>
</div>
<!--STATUS-->
<div style="left:727px;top:336px;width:10px;height:1px;background:#fff"></div>
<svg style="left:720px;top:596px" width="13" height="13" viewBox="0 0 13 13"><path d="M12 1L1 12M12 5L5 12M12 9L9 12" stroke="#fff" stroke-width="1"/><path d="M12.500 2L2 12.500M12.500 3L3 12.500M12.500 6L6 12.500M12.500 7L7 12.500M12.500 10L10 12.500M12.500 11L11 12.500" stroke="#808080" stroke-width="1"/></svg>
<!-- clock -->
<svg style="left:494px;top:594px" width="13" height="13" viewBox="0 0 13 13"><circle cx="6.500" cy="6.500" r="6" fill="#c8e0f8" stroke="#e8f0fc"/><path d="M4 4l2.500 3 2.500-2.500" stroke="#000" fill="none"/></svg>
<span class="t st" style="left:6px">Ready</span>
<div class="ss" style="left:65px"></div>
<span class="t st" style="left:70px;letter-spacing:-0.3px">16 Declarations</span>
<div class="ss" style="left:287px"></div>
<span class="t st" style="left:292px">C-NET(RS232C): COM7, 115200, 8 O 1</span>
<div class="ss" style="left:489px"></div>
<span class="t st" style="left:516px">12:20</span>
<div class="ss" style="left:546px"></div>
<span class="t st" style="left:550px">Offline</span>
<!--CALLOUTS-->
<svg style="left:0;top:0;will-change:transform" width="800" height="613" viewBox="0 0 800 613">
<path d="M493 245.5H748" stroke="#1a1a1a" stroke-width="1.200" fill="none"/>
<path d="M489 294.5H750" stroke="#1a1a1a" stroke-width="1.200" fill="none"/>
<path d="M597 394.5H750" stroke="#1a1a1a" stroke-width="1.200" fill="none"/>
<path d="M657 412.5H751" stroke="#1a1a1a" stroke-width="1.200" fill="none"/>
<path d="M665 503.5H752" stroke="#1a1a1a" stroke-width="1.200" fill="none"/>
<path d="M414 530.5H753" stroke="#1a1a1a" stroke-width="1.200" fill="none"/>
<circle cx="758.5" cy="250.4" r="10.400" fill="#fff" stroke="#000" stroke-width="2"/>
<text x="758.5" y="256.9" text-anchor="middle" font-family="Noto Sans CJK SC,Liberation Sans,sans-serif" font-size="18" textLength="8.300" lengthAdjust="spacingAndGlyphs" stroke="#000" stroke-width="0.400">1</text>
<circle cx="760.4" cy="297.3" r="10.400" fill="#fff" stroke="#000" stroke-width="2"/>
<text x="760.4" y="303.8" text-anchor="middle" font-family="Noto Sans CJK SC,Liberation Sans,sans-serif" font-size="18" textLength="8.300" lengthAdjust="spacingAndGlyphs" stroke="#000" stroke-width="0.400">2</text>
<circle cx="759.5" cy="390.5" r="10.400" fill="#fff" stroke="#000" stroke-width="2"/>
<text x="759.5" y="397.0" text-anchor="middle" font-family="Noto Sans CJK SC,Liberation Sans,sans-serif" font-size="18" textLength="8.300" lengthAdjust="spacingAndGlyphs" stroke="#000" stroke-width="0.400">3</text>
<circle cx="761.2" cy="415.4" r="10.400" fill="#fff" stroke="#000" stroke-width="2"/>
<text x="761.2" y="421.9" text-anchor="middle" font-family="Noto Sans CJK SC,Liberation Sans,sans-serif" font-size="18" textLength="8.300" lengthAdjust="spacingAndGlyphs" stroke="#000" stroke-width="0.400">4</text>
<circle cx="761.5" cy="501.4" r="10.400" fill="#fff" stroke="#000" stroke-width="2"/>
<text x="761.5" y="507.9" text-anchor="middle" font-family="Noto Sans CJK SC,Liberation Sans,sans-serif" font-size="18" textLength="8.300" lengthAdjust="spacingAndGlyphs" stroke="#000" stroke-width="0.400">5</text>
<circle cx="763.3" cy="530.4" r="10.400" fill="#fff" stroke="#000" stroke-width="2"/>
<text x="763.3" y="536.9" text-anchor="middle" font-family="Noto Sans CJK SC,Liberation Sans,sans-serif" font-size="18" textLength="8.300" lengthAdjust="spacingAndGlyphs" stroke="#000" stroke-width="0.400">6</text>
</svg>
</body>
</html>
